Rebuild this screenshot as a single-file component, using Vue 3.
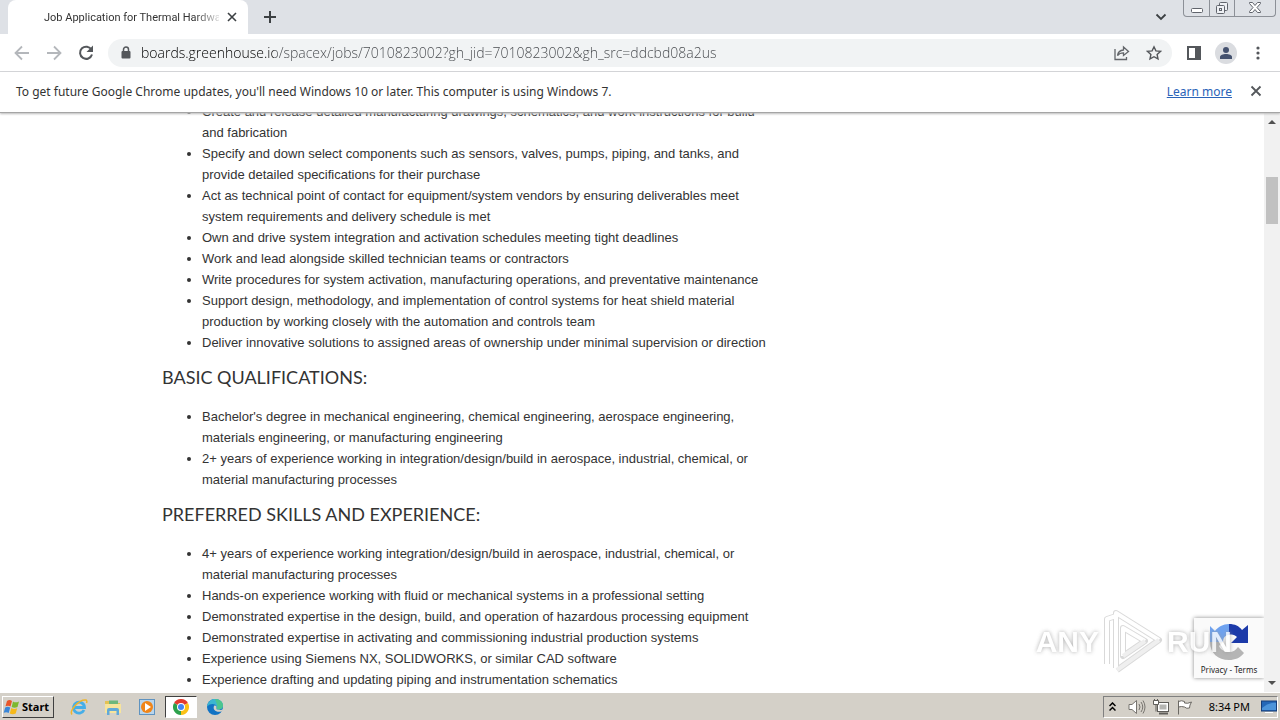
<script setup>
import { ref } from "vue";

const address = ref(
  "boards.greenhouse.io/spacex/jobs/7010823002?gh_jid=7010823002&gh_src=ddcbd08a2us"
);

const responsibilities = [
  "Create and release detailed manufacturing drawings, schematics, and work instructions for build and fabrication",
  "Specify and down select components such as sensors, valves, pumps, piping, and tanks, and provide detailed specifications for their purchase",
  "Act as technical point of contact for equipment/system vendors by ensuring deliverables meet system requirements and delivery schedule is met",
  "Own and drive system integration and activation schedules meeting tight deadlines",
  "Work and lead alongside skilled technician teams or contractors",
  "Write procedures for system activation, manufacturing operations, and preventative maintenance",
  "Support design, methodology, and implementation of control systems for heat shield material production by working closely with the automation and controls team",
  "Deliver innovative solutions to assigned areas of ownership under minimal supervision or direction",
];

const sections = [
  {
    title: "BASIC QUALIFICATIONS:",
    items: [
      "Bachelor's degree in mechanical engineering, chemical engineering, aerospace engineering, materials engineering, or manufacturing engineering",
      "2+ years of experience working in integration/design/build in aerospace, industrial, chemical, or material manufacturing processes",
    ],
  },
  {
    title: "PREFERRED SKILLS AND EXPERIENCE:",
    items: [
      "4+ years of experience working integration/design/build in aerospace, industrial, chemical, or material manufacturing processes",
      "Hands-on experience working with fluid or mechanical systems in a professional setting",
      "Demonstrated expertise in the design, build, and operation of hazardous processing equipment",
      "Demonstrated expertise in activating and commissioning industrial production systems",
      "Experience using Siemens NX, SOLIDWORKS, or similar CAD software",
      "Experience drafting and updating piping and instrumentation schematics",
    ],
  },
];
</script>

<template>
  <div class="screen">
    <header class="tabstrip">
      <div class="tab">
        <span class="tab_title">Job Application for Thermal Hardware</span>
        <button class="icon_btn tab_close" aria-label="Close tab">
          <svg width="10" height="10" viewBox="0 0 10 10">
            <path d="M1 1l8 8M9 1L1 9" stroke="#3c4043" stroke-width="1.6" />
          </svg>
        </button>
      </div>
      <button class="icon_btn new_tab" aria-label="New tab">
        <svg width="12" height="12" viewBox="0 0 12 12">
          <path d="M6 0v12M0 6h12" stroke="#3c4043" stroke-width="2" />
        </svg>
      </button>
      <button class="icon_btn tab_search" aria-label="Search tabs">
        <svg width="12" height="8" viewBox="0 0 12 8">
          <path d="M1.5 1.5L6 6l4.500-4.500" fill="none" stroke="#3c4043" stroke-width="1.8" />
        </svg>
      </button>
      <div class="window_buttons">
        <button class="win_btn" aria-label="Minimize">
          <svg width="14" height="14" viewBox="0 0 14 14">
            <rect x="1.500" y="7.500" width="11" height="4" rx="1" fill="#fff" stroke="#60646c" />
          </svg>
        </button>
        <button class="win_btn" aria-label="Restore">
          <svg width="14" height="14" viewBox="0 0 14 14">
            <g fill="#eef0f4" stroke="#60646c">
              <rect x="4.500" y="1.500" width="8" height="8" rx="1" />
              <rect x="1.500" y="4.500" width="8" height="8" rx="1" />
              <rect x="4.500" y="7.500" width="2" height="2" />
            </g>
          </svg>
        </button>
        <button class="win_btn win_close" aria-label="Close">
          <svg width="14" height="12" viewBox="0 0 14 12">
            <path d="M1.500.5h3L7 3.500 9.500.5h3v1L9 5.500l3.500 4v1h-3L7 7.500l-2.500 3h-3v-1L5 5.500l-3.500-4z" fill="#fff" stroke="#60646c" />
          </svg>
        </button>
      </div>
    </header>

    <div class="toolbar">
      <button class="icon_btn" aria-label="Back">
        <svg width="16" height="16" viewBox="0 0 16 16" fill="none" stroke="#b4b7bb" stroke-width="1.800">
          <path d="M15 8H2M8 1.500L1.500 8 8 14.500" />
        </svg>
      </button>
      <button class="icon_btn" aria-label="Forward">
        <svg width="16" height="16" viewBox="0 0 16 16" fill="none" stroke="#b4b7bb" stroke-width="1.800">
          <path d="M1 8h13M8 1.500L14.500 8 8 14.500" />
        </svg>
      </button>
      <button class="icon_btn" aria-label="Reload">
        <svg width="16" height="16" viewBox="0 0 16 16">
          <path d="M13.500 4.800A6.100 6.100 0 1 0 14 9.500" fill="none" stroke="#54575b" stroke-width="2" />
          <path d="M15 0.500v6.500H8.500z" fill="#54575b" />
        </svg>
      </button>
      <div class="omnibox">
        <svg class="lock" width="10" height="13" viewBox="0 0 10 13">
          <path d="M2.500 6V3.500a2.500 2.500 0 0 1 5 0V6" fill="none" stroke="#54575b" stroke-width="1.500" />
          <rect x="0.500" y="5" width="9" height="7.500" rx="1" fill="#54575b" />
        </svg>
        <input v-model="address" class="address" type="text" aria-label="Address" spellcheck="false" />
        <button class="icon_btn" aria-label="Share">
          <svg width="16" height="16" viewBox="0 0 16 16" fill="none" stroke="#63666a" stroke-width="1.300">
            <path d="M1 4v10.500h11.500V12" />
            <path d="M3.500 10.500C4 7 6.500 5.200 9.500 5V2l5 4.500-5 4V7.800c-2.500 0-4.500.7-6 2.700z" />
          </svg>
        </button>
        <button class="icon_btn" aria-label="Bookmark">
          <svg width="16" height="16" viewBox="0 0 16 16">
            <path d="M8 1.800l1.900 4.100 4.500.5-3.300 3 .9 4.500L8 11.700l-4 2.200.9-4.500-3.300-3 4.500-.5z" fill="none" stroke="#54575b" stroke-width="1.400" />
          </svg>
        </button>
      </div>
      <button class="icon_btn" aria-label="Side panel">
        <svg width="14" height="14" viewBox="0 0 14 14">
          <path d="M0 0h14v14H0zM2 2v10h6V2z" fill="#54575b" fill-rule="evenodd" />
        </svg>
      </button>
      <button class="icon_btn avatar" aria-label="Profile">
        <svg width="12" height="12" viewBox="0 0 12 12" fill="#44516e">
          <circle cx="6" cy="3" r="3" />
          <path d="M0 12V10c0-2 3-3 6-3s6 1 6 3v2z" />
        </svg>
      </button>
      <button class="icon_btn" aria-label="Menu">
        <svg width="4" height="14" viewBox="0 0 4 14" fill="#54575b">
          <circle cx="2" cy="2" r="1.600" />
          <circle cx="2" cy="7" r="1.600" />
          <circle cx="2" cy="12" r="1.600" />
        </svg>
      </button>
    </div>

    <div class="infobar">
      <span>To get future Google Chrome updates, you'll need Windows 10 or later. This computer is using Windows 7.</span>
      <a href="#">Learn more</a>
      <button class="icon_btn" aria-label="Dismiss">
        <svg width="12" height="12" viewBox="0 0 12 12">
          <path d="M1.500 1.500l9 9M10.500 1.500l-9 9" stroke="#54575b" stroke-width="1.800" />
        </svg>
      </button>
    </div>

    <div class="viewport">
      <main class="page">
        <div class="job">
          <ul>
            <li v-for="item in responsibilities" :key="item">{{ item }}</li>
          </ul>
          <section v-for="section in sections" :key="section.title">
            <h3>{{ section.title }}</h3>
            <ul>
              <li v-for="item in section.items" :key="item">{{ item }}</li>
            </ul>
          </section>
        </div>
        <div class="recaptcha">
          <svg width="42" height="40" viewBox="0 0 42 40">
            <path d="M2 20V4l5 5c3-4 8-7 14-7v11c-4 0-6 3-6 7z" fill="#6ea2f0" />
            <path d="M21 2c6 0 10 2 13 6l6-5v18H23l6-6c-2-2-5-3-8-2z" fill="#1c3aa9" />
            <path d="M2 20h13l-4 4c2 4 6 6 10 6s7-2 9-5l6 6c-4 5-9 7-15 7C10 38 2 31 2 20z" fill="#b5b5b5" />
          </svg>
          <span><a href="#">Privacy</a> - <a href="#">Terms</a></span>
        </div>
        <div class="watermark">
          <span>ANY</span>
          <svg width="60" height="64" viewBox="0 0 60 64" fill="none" stroke-linejoin="round">
            <g stroke="#d0d0d0" stroke-width="6">
              <path d="M4 54V9l9-3M13 58V3l43 27-42 30" />
              <path d="M20 46V18l22 13-22 15z" />
            </g>
            <g stroke="#fff" stroke-width="4">
              <path d="M4 54V9l9-3M13 58V3l43 27" />
              <path d="M20 46V18l22 13" />
            </g>
            <g stroke="#ececec" stroke-width="4">
              <path d="M56 30L14 60" />
              <path d="M42 31L20 46" />
            </g>
          </svg>
          <span>RUN</span>
        </div>
      </main>
      <div class="scrollbar">
        <svg width="8" height="4" viewBox="0 0 8 4"><path d="M0 4l4-4 4 4z" fill="#505050" /></svg>
        <div class="track"><div class="thumb"></div></div>
        <svg width="8" height="4" viewBox="0 0 8 4"><path d="M0 0l4 4 4-4z" fill="#505050" /></svg>
      </div>
    </div>

    <footer class="taskbar">
      <button class="start">
        <svg width="18" height="16" viewBox="0 0 18 16">
          <path d="M4 2c2-1.500 3.500-1 5 0L7.500 7.500C6 6.500 4.500 6.300 2.500 7.300z" fill="#e8562a" />
          <path d="M10 2.500c1.500 1 3.500 1.300 6 0L14.500 8c-2 1-4 1-5.800 0z" fill="#7db82f" />
          <path d="M2.200 8.500c2-1 3.500-.8 5 .1L5.700 14c-1.500-1-3-1.200-5-.2z" fill="#3a86d8" />
          <path d="M8.300 9c2 1.200 3.800 1.100 5.900.2l-1.500 5.300c-2 1-3.900 1-5.900 0z" fill="#f6b91a" />
        </svg>
        Start
      </button>
      <div class="launchers">
        <button class="launcher" aria-label="Internet Explorer">
          <svg width="18" height="18" viewBox="0 0 18 18" fill="none">
            <path d="M14 12A5.500 5.500 0 1 1 14.500 9.500H5" stroke="#45aee8" stroke-width="2.800" />
            <path d="M2 16.500C-1 13 9 1 16 2c1 .5 1 2 .5 3" stroke="#efb52b" stroke-width="1.500" />
          </svg>
        </button>
        <button class="launcher" aria-label="Explorer">
          <svg width="18" height="18" viewBox="0 0 18 18">
            <path d="M1 3h6l1 2h8v10H1z" fill="#e3c255" />
            <path d="M5 2.500h9V7H5z" fill="#6eb77b" />
            <path d="M1 6h16v9H1z" fill="#f7e49c" />
            <path d="M3 17v-5q0-2 2-2h8q2 0 2 2v5h-2.500v-4h-7v4z" fill="#62a9d8" />
          </svg>
        </button>
        <button class="launcher" aria-label="Media Player">
          <svg width="18" height="18" viewBox="0 0 18 18">
            <rect x="1.500" y="1.500" width="15" height="15" fill="#b9d5ec" stroke="#5f93c0" />
            <circle cx="9" cy="9" r="6" fill="#f08519" />
            <path d="M7 5l6 4-6 4z" fill="#fff" />
          </svg>
        </button>
        <button class="launcher active" aria-label="Chrome">
          <svg width="16" height="16" viewBox="0 0 16 16">
            <path d="M8 8L1.070 4A8 8 0 0 1 14.930 4z" fill="#e33b2e" />
            <path d="M8 8l6.930-4A8 8 0 0 1 8 16z" fill="#fbc116" />
            <path d="M8 8v8A8 8 0 0 1 1.070 4z" fill="#2da14c" />
            <circle cx="8" cy="8" r="4" fill="#fff" />
            <circle cx="8" cy="8" r="3" fill="#4285f4" />
          </svg>
        </button>
        <button class="launcher" aria-label="Edge">
          <svg width="18" height="18" viewBox="0 0 18 18">
            <circle cx="9" cy="9" r="8" fill="#1273c4" />
            <path d="M1 8.500C2 3.500 5 1 9 1c5 0 8 3 8 6.500 0 2.500-2 4-4.500 4-2 0-2.500-1-1.500-2C11 6 5 4 1 8.500z" fill="#3cb6d0" />
            <path d="M9 1c5 0 8 3 8 6.500 0 2.500-2 4-4.500 4-2 0-2.500-1-1.500-2 1-3-1-5-2-8.500z" fill="#4cc58f" />
            <path d="M8 8c-1.500 3.500 2 7 7.500 5.500l2-1.500v-1c-1.500 1-3 1-5 .8-2 0-2.500-1-2-2.300C11 8 9 7 8 8z" fill="#d4d0c8" />
          </svg>
        </button>
      </div>
      <div class="tray">
        <button class="icon_btn" aria-label="Show hidden icons">
          <svg width="7" height="10" viewBox="0 0 7 10" fill="none" stroke="#000" stroke-width="1.500">
            <path d="M.5 4l3-3 3 3M.5 8.500l3-3 3 3" />
          </svg>
        </button>
        <svg width="18" height="16" viewBox="0 0 18 16" fill="none" stroke="#77746f">
          <path d="M1 5.500h3L8.500 1.500v13L4 10.500H1z" fill="#fff" />
          <path d="M11 5q2 3 0 6M13 3q3.500 5 0 10M15 1.500q4 6.500 0 13" />
        </svg>
        <svg width="16" height="16" viewBox="0 0 16 16" fill="#fff" stroke="#5f5d59">
          <rect x="4.500" y="3.500" width="11" height="9" />
          <rect x="6.500" y="5.500" width="7" height="5" fill="#b5b5b2" stroke="none" />
          <path d="M6 14.500h9" stroke-width="2" />
          <path d="M.5 1.500h5v4h-5zM1.500 0v2M4.500 0v2M3 5.500v7" />
        </svg>
        <svg width="18" height="16" viewBox="0 0 18 16" fill="#fff" stroke="#6b6863">
          <path d="M2.500 15.500V1.500M2.500 2.500q3-1.500 6 0v1.500q3 1 7-1-2 3-2 6-3 1-5-1-3-1-6 0z" />
        </svg>
        <time>8:34 PM</time>
        <svg class="desktop" width="16" height="14" viewBox="0 0 16 14">
          <rect x="0.500" y="1" width="15" height="10" fill="#2467b7" stroke="#173e78" />
          <path d="M1 8Q8 2 15 3v7H1z" fill="#4c94da" />
          <path d="M4 12.500h8" stroke="#fff" />
        </svg>
      </div>
    </footer>
  </div>
</template>

<style>
body {
  margin: 0;
}
</style>

<style scoped>
.screen {
  display: flex;
  flex-direction: column;
  height: 100vh;
  overflow: hidden;
  background: #fff;
  font-family: "Noto Sans", "Open Sans", sans-serif;
  font-size: 12px;
  color: #333;
}

button {
  font-family: inherit;
  padding: 0;
  border: none;
  background: none;
}

.icon_btn {
  display: flex;
  align-items: center;
  justify-content: center;
  width: 16px;
  height: 16px;
  flex: none;
}

.tabstrip {
  display: flex;
  align-items: center;
  height: 34px;
  flex: none;
  padding-left: 8px;
  background: #dee1e6;
}

.tab {
  display: flex;
  align-items: center;
  width: 240px;
  height: 34px;
  box-sizing: border-box;
  padding-left: 36px;
  border-radius: 8px 8px 0 0;
  background: #fff;
}

.tab_title {
  width: 175px;
  overflow: hidden;
  white-space: nowrap;
  font-family: Roboto, sans-serif;
  font-size: 11px;
  mask-image: linear-gradient(to right, #000 150px, transparent 180px);
}

.tab_close {
  margin-left: 5px;
}

.new_tab {
  margin-left: 14px;
}

.tab_search {
  margin-left: auto;
  margin-right: 14px;
}

.window_buttons {
  display: flex;
  align-self: flex-start;
  height: 16px;
  margin-right: 4px;
  border: 1px solid #8c9097;
  border-top: none;
  border-radius: 0 0 4px 4px;
}

.win_btn {
  display: flex;
  align-items: center;
  justify-content: center;
  width: 25px;
}

.win_btn + .win_btn {
  border-left: 1px solid #8c9097;
}

.win_close {
  width: 41px;
}

.toolbar {
  display: flex;
  align-items: center;
  gap: 16px;
  height: 37px;
  flex: none;
  padding: 0 14px;
  border-bottom: 1px solid #d5d7da;
}

.omnibox {
  display: flex;
  align-items: center;
  gap: 16px;
  flex: 1;
  height: 28px;
  margin: 0 -2px;
  padding: 0 10px 0 13px;
  border-radius: 14px;
  background: #f1f3f4;
}

.address {
  flex: 1;
  min-width: 0;
  margin-left: -6px;
  padding: 0;
  border: none;
  outline: none;
  font-family: "Open Sans", sans-serif;
  font-size: 14px;
  font-weight: 300;
  color: transparent;
  background: linear-gradient(to right, #000 133px, #44474b 133px);
  background-clip: text;
}

.avatar {
  width: 22px;
  height: 22px;
  margin: 0 -3px;
  border-radius: 50%;
  background: #dadce0;
}

.infobar {
  display: flex;
  align-items: center;
  height: 38px;
  flex: none;
  padding: 0 16px 2px;
  border-bottom: 1px solid #a5a5a5;
  box-shadow: 0 1px 2px #bbb;
  position: relative;
  z-index: 1;
}

.infobar a {
  margin-left: auto;
  margin-right: 16px;
  color: #2a63b8;
}

.viewport {
  display: flex;
  flex: 1;
  min-height: 0;
}

.page {
  position: relative;
  flex: 1;
  overflow: hidden;
}

.job {
  max-width: 940px;
  margin: -12px auto 0;
  font-family: "Liberation Sans", Arial, sans-serif;
  font-size: 13px;
  line-height: 21px;
}

.job ul {
  max-width: 572px;
  margin: 0;
  padding-left: 40px;
}

h3 {
  margin: 12px 0 17px;
  font-family: Lato, sans-serif;
  font-size: 18px;
  font-weight: 400;
  line-height: 24px;
}

.recaptcha {
  position: absolute;
  right: 0;
  bottom: 14px;
  display: flex;
  flex-direction: column;
  align-items: center;
  gap: 2px;
  width: 70px;
  height: 60px;
  padding-top: 4px;
  box-sizing: border-box;
  background: #fafafa;
  box-shadow: 0 0 4px #888;
  font-size: 8px;
  color: #222;
}

.recaptcha span {
  white-space: nowrap;
}

.recaptcha a {
  color: inherit;
  text-decoration: none;
}

.watermark {
  position: absolute;
  right: 32px;
  bottom: 18px;
  display: flex;
  align-items: center;
  gap: 4px;
  font-family: "Liberation Sans", sans-serif;
  font-size: 30px;
  font-weight: bold;
  color: #fff;
  text-shadow: 0 0 4px #999;
  opacity: 0.8;
}

.scrollbar {
  display: flex;
  flex-direction: column;
  align-items: center;
  width: 16px;
  box-sizing: border-box;
  padding: 7px 0;
  background: #f1f1f1;
}

.track {
  flex: 1;
  padding-top: 53px;
}

.thumb {
  width: 12px;
  height: 47px;
  background: #c1c1c1;
}

.taskbar {
  display: flex;
  align-items: center;
  height: 27px;
  flex: none;
  padding: 0 2px;
  border-top: 1px solid #fff;
  background: #d4d0c8;
  color: #000;
}

.start {
  display: flex;
  align-items: center;
  gap: 1px;
  width: 52px;
  height: 22px;
  box-sizing: border-box;
  border: 1px solid;
  border-color: #fff #404040 #404040 #fff;
  font-size: 11px;
  font-weight: bold;
}

.launchers {
  display: flex;
  gap: 2px;
  margin-left: 9px;
}

.launcher {
  display: flex;
  align-items: center;
  justify-content: center;
  width: 32px;
  height: 22px;
}

.launcher.active {
  box-sizing: border-box;
  border: 1px solid;
  border-color: #404040 #fff #fff #404040;
  background: #fff;
}

.tray {
  display: flex;
  align-items: center;
  gap: 7px;
  height: 22px;
  box-sizing: border-box;
  margin-left: auto;
  padding-left: 1px;
  border: 1px solid;
  border-color: #808080 #fff #fff #808080;
}

.tray time {
  margin: 0 4px 0 8px;
  font-size: 11px;
}
</style>
